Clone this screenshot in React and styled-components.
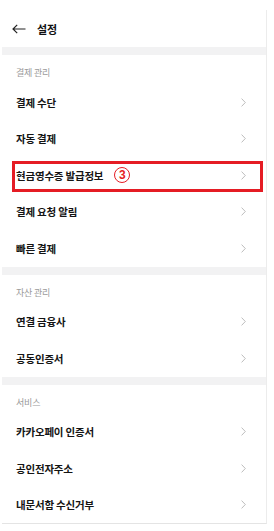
import React from "react";
import styled, { createGlobalStyle } from "styled-components";

const Global = createGlobalStyle`
  html, body { margin: 0; padding: 0; background: #fff; }
  body { font-family: "Noto Sans CJK KR", "Noto Sans", sans-serif; }
`;

const Page = styled.div`
  padding-top: 10px;
  padding-left: 2px;
  width: 265px;
`;

const Panel = styled.div`
  border-right: 1px solid #ececec;
  border-bottom: 1px solid #e4e4e4;
  background: #fff;
`;

const Header = styled.div`
  height: 37px;
  display: flex;
  align-items: center;
  gap: 11px;
  padding-left: 10px;
  box-sizing: border-box;
`;

const Title = styled.h1`
  margin: 0;
  font-size: 11px;
  font-weight: 700;
  color: #111;
  letter-spacing: -0.2px;
`;

const Divider = styled.div`
  height: 8px;
  background: #f2f2f3;
`;

const SectionLabel = styled.div`
  padding: 11px 0 5px 14px;
  font-size: 9px;
  line-height: 13px;
  color: #9a9a9a;
  letter-spacing: -0.2px;
`;

const Row = styled.div`
  position: relative;
  height: 36.5px;
  display: flex;
  align-items: center;
  justify-content: space-between;
  padding: 0 20px 0 14px;
  box-sizing: border-box;
  ${(p) =>
    p.$highlight &&
    `
    &::after {
      content: "";
      position: absolute;
      top: 4px;
      bottom: 2px;
      left: 10px;
      right: 3px;
      border: 3px solid #e51c24;
      pointer-events: none;
    }
  `}
`;

const RowText = styled.span`
  display: flex;
  align-items: center;
  gap: 11px;
  font-size: 10.5px;
  font-weight: 700;
  color: #141414;
  letter-spacing: -0.2px;
`;

const Badge = styled.span`
  width: 14px;
  height: 14px;
  border: 1.6px solid #e51c24;
  border-radius: 50%;
  display: inline-flex;
  align-items: center;
  justify-content: center;
  color: #e51c24;
  font-family: "Liberation Sans", Arial, sans-serif;
  font-size: 12px;
  font-weight: 700;
  line-height: 1;
`;

const BackArrow = () => (
  <svg width="14" height="10" viewBox="0 0 14 10" fill="none">
    <path d="M13.5 5H1M5.2 0.8L1 5l4.2 4.2" stroke="#222" strokeWidth="1.2" />
  </svg>
);

const Chevron = () => (
  <svg width="5" height="9" viewBox="0 0 5 9" fill="none">
    <path d="M0.6 0.6L4.3 4.5L0.6 8.4" stroke="#b5b5b5" strokeWidth="0.9" />
  </svg>
);

const sections = [
  {
    label: "결제 관리",
    items: ["결제 수단", "자동 결제", "현금영수증 발급정보", "결제 요청 알림", "빠른 결제"],
  },
  { label: "자산 관리", items: ["연결 금융사", "공동인증서"] },
  { label: "서비스", items: ["카카오페이 인증서", "공인전자주소", "내문서함 수신거부"] },
];

export default function App() {
  return (
    <>
      <Global />
      <Page>
        <Panel>
          <Header>
            <BackArrow />
            <Title>설정</Title>
          </Header>
          {sections.map((s) => (
            <React.Fragment key={s.label}>
              <Divider />
              <SectionLabel>{s.label}</SectionLabel>
              {s.items.map((it) => {
                const hl = it === "현금영수증 발급정보";
                return (
                  <Row key={it} $highlight={hl}>
                    <RowText>
                      {it}
                      {hl && <Badge>3</Badge>}
                    </RowText>
                    <Chevron />
                  </Row>
                );
              })}
            </React.Fragment>
          ))}
        </Panel>
      </Page>
    </>
  );
}
